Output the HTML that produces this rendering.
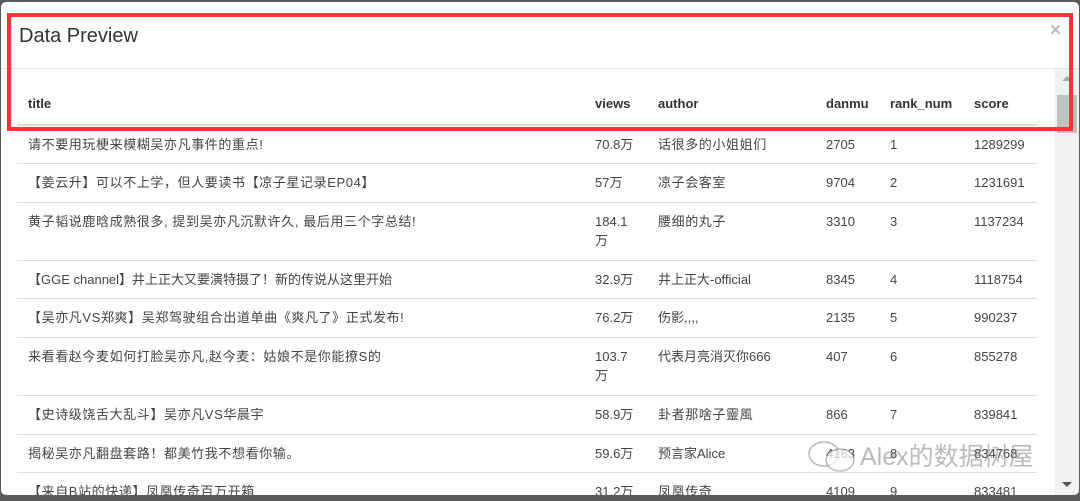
<!DOCTYPE html>
<html><head><meta charset="utf-8"><style>
*{margin:0;padding:0;box-sizing:border-box}
body{width:1080px;height:501px;overflow:hidden;background:#5a5a5a;font-family:"Liberation Sans","Noto Sans CJK SC",sans-serif;position:relative}
.modal{position:absolute;left:1px;top:2px;width:1078px;height:493px;background:#fff;border-radius:5px;overflow:hidden}
.title{position:absolute;left:18px;top:23px;font-size:20px;color:#333}
.close{position:absolute;left:1049px;top:18px;font-size:19px;color:#bbb;font-weight:bold}
.hline{position:absolute;left:0;top:66px;width:1078px;height:1px;background:#e5e5e5}
.red{position:absolute;left:7px;top:13px;width:1066px;height:118px;border:4px solid #f33;z-index:5}
.sb{position:absolute;left:1054px;top:67px;width:24px;height:426px;background:#f1f1f1}
.thumb{position:absolute;left:1056px;top:93px;width:20px;height:38px;background:#c1c1c1}
.t{position:absolute;font-size:13px;color:#444;white-space:nowrap;line-height:19px}
.h{font-weight:bold;color:#333}
.c{letter-spacing:0.6px}
.b{position:absolute;left:17px;width:1020px;height:1px;background:#ddd}
.wm{position:absolute;left:860px;top:437px;font-size:25px;color:rgba(120,120,120,0.5);z-index:6}
</style></head><body>
<div class="modal">
<div class="title">Data Preview</div>
<div class="close">×</div>
<div class="hline"></div>
<div class="sb"></div><div class="thumb"></div>
<div style="position:absolute;left:1061px;top:74px;border:5px solid transparent;border-bottom-color:#aaa;border-top:0"></div>
<div style="position:absolute;left:1061px;top:480px;border:5px solid transparent;border-top-color:#555;border-bottom:0"></div>
</div>
<div class="red"></div>
<div class="t h" style="left:28px;top:94px">title</div>
<div class="t h" style="left:595px;top:94px">views</div>
<div class="t h" style="left:658px;top:94px">author</div>
<div class="t h" style="left:826px;top:94px">danmu</div>
<div class="t h" style="left:890px;top:94px">rank_num</div>
<div class="t h" style="left:974px;top:94px">score</div>
<div class="b" style="top:124px;height:2px"></div>

<div class="t c" style="left:28px;top:135px">请不要用玩梗来模糊吴亦凡事件的重点!</div><div class="t" style="left:595px;top:135px">70.8万</div><div class="t c" style="left:658px;top:135px">话很多的小姐姐们</div><div class="t" style="left:826px;top:135px">2705</div><div class="t" style="left:890px;top:135px">1</div><div class="t" style="left:974px;top:135px">1289299</div>
<div class="b" style="top:163px"></div>
<div class="t c" style="left:28px;top:173px">【姜云升】可以不上学，但人要读书【凉子星记录EP04】</div><div class="t" style="left:595px;top:173px">57万</div><div class="t c" style="left:658px;top:173px">凉子会客室</div><div class="t" style="left:826px;top:173px">9704</div><div class="t" style="left:890px;top:173px">2</div><div class="t" style="left:974px;top:173px">1231691</div>
<div class="b" style="top:202px"></div>
<div class="t c" style="left:28px;top:212px">黄子韬说鹿晗成熟很多, 提到吴亦凡沉默许久, 最后用三个字总结!</div><div class="t" style="left:595px;top:212px">184.1<br>万</div><div class="t c" style="left:658px;top:212px">腰细的丸子</div><div class="t" style="left:826px;top:212px">3310</div><div class="t" style="left:890px;top:212px">3</div><div class="t" style="left:974px;top:212px">1137234</div>
<div class="b" style="top:260px"></div>
<div class="t" style="left:28px;top:270px">【GGE channel】井上正大又要演特摄了！新的传说从这里开始</div><div class="t" style="left:595px;top:270px">32.9万</div><div class="t" style="left:658px;top:270px">井上正大-official</div><div class="t" style="left:826px;top:270px">8345</div><div class="t" style="left:890px;top:270px">4</div><div class="t" style="left:974px;top:270px">1118754</div>
<div class="b" style="top:298px"></div>
<div class="t c" style="left:28px;top:308px">【吴亦凡VS郑爽】吴郑驾驶组合出道单曲《爽凡了》正式发布!</div><div class="t" style="left:595px;top:308px">76.2万</div><div class="t" style="left:658px;top:308px">伤影,,,,</div><div class="t" style="left:826px;top:308px">2135</div><div class="t" style="left:890px;top:308px">5</div><div class="t" style="left:974px;top:308px">990237</div>
<div class="b" style="top:337px"></div>
<div class="t c" style="left:28px;top:347px">来看看赵今麦如何打脸吴亦凡,赵今麦：姑娘不是你能撩S的</div><div class="t" style="left:595px;top:347px">103.7<br>万</div><div class="t" style="left:658px;top:347px">代表月亮消灭你666</div><div class="t" style="left:826px;top:347px">407</div><div class="t" style="left:890px;top:347px">6</div><div class="t" style="left:974px;top:347px">855278</div>
<div class="b" style="top:395px"></div>
<div class="t c" style="left:28px;top:405px">【史诗级饶舌大乱斗】吴亦凡VS华晨宇</div><div class="t" style="left:595px;top:405px">58.9万</div><div class="t c" style="left:658px;top:405px">卦者那啥子靈風</div><div class="t" style="left:826px;top:405px">866</div><div class="t" style="left:890px;top:405px">7</div><div class="t" style="left:974px;top:405px">839841</div>
<div class="b" style="top:434px"></div>
<div class="t c" style="left:28px;top:444px">揭秘吴亦凡翻盘套路！都美竹我不想看你输。</div><div class="t" style="left:595px;top:444px">59.6万</div><div class="t" style="left:658px;top:444px">预言家Alice</div><div class="t" style="left:826px;top:444px">4163</div><div class="t" style="left:890px;top:444px">8</div><div class="t" style="left:974px;top:444px">834768</div>
<div class="b" style="top:472px"></div>
<div class="t c" style="left:28px;top:482px">【来自B站的快递】凤凰传奇百万开箱</div><div class="t" style="left:595px;top:482px">31.2万</div><div class="t c" style="left:658px;top:482px">凤凰传奇</div><div class="t" style="left:826px;top:482px">4109</div><div class="t" style="left:890px;top:482px">9</div><div class="t" style="left:974px;top:482px">833481</div>
<div style="position:absolute;left:0;top:495px;width:1080px;height:6px;background:#5a5a5a;z-index:4"></div>
<svg style="position:absolute;left:806px;top:440px;z-index:6" width="52" height="34"><ellipse cx="18" cy="14" rx="15" ry="12" fill="none" stroke="rgba(140,140,140,.6)" stroke-width="1.5"/><ellipse cx="34" cy="20" rx="14" ry="11" fill="rgba(255,255,255,.7)" stroke="rgba(140,140,140,.6)" stroke-width="1.5"/></svg>
<div class="wm">Alex的数据树屋</div>
</body></html>
